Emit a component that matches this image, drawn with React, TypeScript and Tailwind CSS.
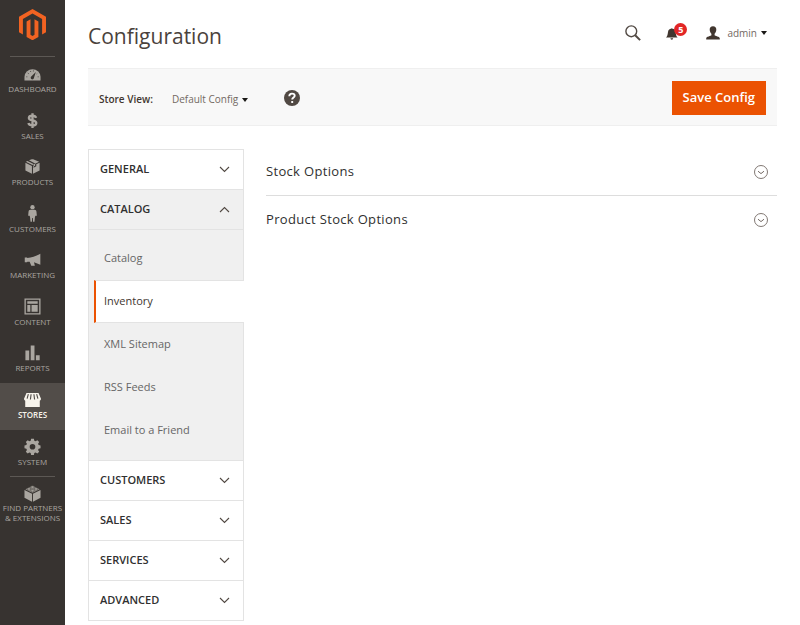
import { useState, type ReactNode } from "react";
import { clsx } from "clsx";

const menuItems: { label: string; icon: ReactNode }[] = [
  {
    label: "Dashboard",
    icon: (
      <>
        <path d="M.5 16.5v-4a8.5 8 0 0 1 17 0v4z" fill="currentColor" />
        <path d="M12.5 7.5 8 12a1.7 1.7 0 1 0 2.4 2z" fill="#373330" />
        <path
          d="M2.5 12.5h1M4 8.5l1 .7M6.7 6.3l.5 1M10 5.8v1M14.5 12.5h1M14 9l-.6.5"
          stroke="#373330"
          strokeWidth=".8"
        />
      </>
    ),
  },
  {
    label: "Sales",
    icon: (
      <path
        d="M12.8 6.2C12.3 4.6 11 4 9 4c-2.2 0-3.8.9-3.8 2.4 0 3.5 7.8 1.6 7.8 5.2 0 1.6-1.5 2.6-4 2.6-2.3 0-3.9-.8-4.3-2.5M9 1.2v15.8"
        fill="none"
        stroke="currentColor"
        strokeWidth="2.5"
      />
    ),
  },
  {
    label: "Products",
    icon: (
      <path
        d="M8.2 1.2 5.3 2.5l6.5 3.2v2.5l-1.7.8V6.4L3.7 3.2 2 4l6.9 3.5L16 4 9.7 1.2zM1.5 5v8.2l6.9 3.5V8.4zM16.5 5v8.2l-7 3.5V8.4l.6-.2v2.1l2.9-1.5V6.7z"
        fill="currentColor"
      />
    ),
  },
  {
    label: "Customers",
    icon: (
      <>
        <circle cx="9" cy="2.3" r="2.3" fill="currentColor" />
        <path
          d="M7 4.9h4c1.5 0 2.1.9 2.2 2.3l.4 4.2h-1.5l-.5 1.2-.5 5.2H9.6l-.2-4h-.8l-.2 4H6.9L6.4 12.6l-.5-1.2H4.4l.4-4.2C4.9 5.8 5.5 4.9 7 4.9z"
          fill="currentColor"
        />
      </>
    ),
  },
  {
    label: "Marketing",
    icon: (
      <path
        d="M17.3 3v11.5l-6.7-2.6.9 3.8H7.7L6 11.5l-2.4-.2-.4.7H.8V6.8h2.4l.4.7C8 7 12.5 5.5 17.3 3z"
        fill="currentColor"
      />
    ),
  },
  {
    label: "Content",
    icon: (
      <>
        <path d="M1.2 1.2h15.6v15.6H1.2z" fill="none" stroke="currentColor" strokeWidth="1.4" />
        <path d="M3.5 3.5h11v2.7h-11zM3.5 7.5h3.2v7H3.5zM8 7.5h6.5v7H8z" fill="currentColor" />
      </>
    ),
  },
  {
    label: "Reports",
    icon: <path d="M1.5 7h4v10.3h-4zM7.1 1.5h4v15.8h-4zM12.6 12h4v5.3h-4z" fill="currentColor" />,
  },
  {
    label: "Stores",
    icon: (
      <>
        <path
          d="M2.6 2h12.8L18 8.2a2 2 0 0 1-1.3 2V17H1.3v-6.8a2 2 0 0 1-1.3-2z"
          fill="currentColor"
        />
        <path
          d="M4.6 3.4 3.3 8M7.5 3.4 6.8 9M10.5 3.4l.7 5.6M13.4 3.4 14.7 8"
          stroke="#524d49"
          strokeWidth="1.2"
        />
      </>
    ),
  },
  {
    label: "System",
    icon: (
      <path
        fillRule="evenodd"
        d="M7.5.8h3l.4 2.1 1.4.6L14.1 2.3l2 2-1.2 1.8.6 1.4 2 .4v3l-2 .4-.6 1.4 1.2 1.8-2 2-1.8-1.2-1.4.6-.4 2h-3l-.4-2-1.4-.6-1.8 1.2-2-2 1.2-1.8-.6-1.4-2-.4v-3l2-.4.6-1.4-1.2-1.8 2-2 1.8 1.2 1.4-.6zM9 6.3a3 3 0 1 0 0 6 3 3 0 0 0 0-6z"
        fill="currentColor"
      />
    ),
  },
];

const sections = [
  { title: "General", items: [] },
  {
    title: "Catalog",
    items: ["Catalog", "Inventory", "XML Sitemap", "RSS Feeds", "Email to a Friend"],
  },
  { title: "Customers", items: [] },
  { title: "Sales", items: [] },
  { title: "Services", items: [] },
  { title: "Advanced", items: [] },
];

function MenuIcon({ children }: { children: ReactNode }) {
  return (
    <svg viewBox="0 0 18 18" className="h-[17px] w-[17px] shrink-0" aria-hidden="true">
      {children}
    </svg>
  );
}

function Sidebar() {
  return (
    <aside className="flex w-[65px] shrink-0 flex-col items-center bg-[#373330] text-[#aaa6a0]">
      <a href="#" aria-label="Home" className="mt-[9px] mb-4">
        <svg viewBox="0 0 27 31" className="h-[31px] w-[27px]">
          <path
            d="M13.5 0 27 7.8v15.5l-3.9 2.2V10L13.5 4.5 3.9 10v15.5L0 23.3V7.8z"
            fill="#f26322"
          />
          <path
            d="M11.5 10.2v15.5l2 1.2 2-1.2V10.2l3.9 2.2v15.5l-5.9 3.4-5.9-3.4V12.4z"
            fill="#f26322"
          />
        </svg>
      </a>
      <nav className="w-full text-center text-[8px] leading-[10px] uppercase">
        <div className="mx-[10px] h-px bg-[#5c5854]" />
        <ul className="flex h-[419px] flex-col">
          {menuItems.map((item) => (
            <li key={item.label} className="flex-1">
              <a
                href="#"
                className={clsx(
                  "flex h-full flex-col items-center gap-0.5 pt-2",
                  item.label === "Stores" && "bg-[#524d49] font-semibold text-[#f7f3eb]",
                )}
              >
                <MenuIcon>{item.icon}</MenuIcon>
                {item.label}
              </a>
            </li>
          ))}
        </ul>
        <div className="mx-[10px] h-px bg-[#5c5854]" />
        <a href="#" className="flex flex-col items-center gap-px pt-2">
          <MenuIcon>
            <path
              d="M9 1 1.5 4.5 9 8.2l7.5-3.7zM.5 5.2v8.4l8 4.1V9.2zM17.5 5.2v8.4l-8 4.1V9.2z"
              fill="currentColor"
            />
            <g fill="currentColor" stroke="#373330" strokeWidth=".6">
              <ellipse cx="9" cy="2.2" rx="2.1" ry="1.3" />
              <ellipse cx="5.2" cy="4.2" rx="2.1" ry="1.3" />
              <ellipse cx="12.8" cy="4.2" rx="2.1" ry="1.3" />
              <ellipse cx="9" cy="6.2" rx="2.1" ry="1.3" />
            </g>
          </MenuIcon>
          <span>
            Find Partners
            <br />& Extensions
          </span>
        </a>
      </nav>
    </aside>
  );
}

function Caret() {
  return (
    <svg viewBox="0 0 6 4" className="h-1 w-1.5" aria-hidden="true">
      <path d="M0 0h6L3 4z" fill="#1a1816" />
    </svg>
  );
}

function Header() {
  return (
    <header className="flex items-center pr-[10px]">
      <h1 className="flex-1 text-[21px] leading-8 text-[#4a423c]">Configuration</h1>
      <div className="flex items-center pb-1.5">
        <button type="button" aria-label="Search" className="mr-[25px]">
          <svg viewBox="0 0 16 16" className="h-4 w-4" fill="none" stroke="#514943">
            <circle cx="6.3" cy="6.3" r="5.4" strokeWidth="1.4" />
            <path d="m10.2 10.2 4.9 4.9" strokeWidth="2" />
          </svg>
        </button>
        <button type="button" aria-label="Notifications" className="relative mr-5">
          <svg viewBox="0 0 20 16" className="h-4 w-5">
            <path
              d="M0 12.5c1.5-1.4 1.6-3.3 2-5.6C2.3 5 3.4 4.1 5 3.8a.9.9 0 0 1 1.6 0c1.6.3 2.7 1.2 3 3.1.4 2.3.5 4.2 2 5.6zM4.4 13.3h2.8a1.4 1.4 0 0 1-2.8 0z"
              fill="#41362f"
            />
          </svg>
          <span className="absolute -top-0.5 -right-px h-[13px] w-[13px] rounded-full bg-[#e22626] text-[9px] leading-[13px] font-bold text-white">
            5
          </span>
        </button>
        <button type="button" className="flex items-center text-[10px] text-[#736963]">
          <svg viewBox="0 0 14 14" className="mr-[7px] h-3.5 w-3.5" aria-hidden="true">
            <path
              d="M7 .3c2.2 0 3.4 1.4 3.3 3.5-.1 1.9-.8 3-1.7 4v1.5c.3 1 5 1 5.2 3.1v1.2H.2v-1.2c.2-2.1 4.9-2.1 5.2-3.1V7.8c-.9-1-1.6-2.1-1.7-4C3.6 1.7 4.8.3 7 .3z"
              fill="#41362f"
            />
          </svg>
          <span className="mr-1">admin</span>
          <Caret />
        </button>
      </div>
    </header>
  );
}

function Toolbar() {
  return (
    <div className="mt-4 flex items-center border-y border-[#efefef] bg-[#f8f8f8] pt-3 pr-[11px] pb-[10px] pl-[11px]">
      <div className="flex items-center pt-[3px] text-[10px]">
        <span className="font-semibold text-[#41362f]">Store View:</span>
        <button type="button" className="ml-[19px] flex items-center text-[#736963]">
          <span className="mr-1">Default Config</span>
          <Caret />
        </button>
      </div>
      <button type="button" aria-label="Help" className="ml-9">
        <svg viewBox="0 0 16 16" className="h-4 w-4">
          <circle cx="8" cy="8" r="8" fill="#514943" />
          <path
            d="M5.3 6.2c0-1.8 1.1-2.6 2.7-2.6s2.7.9 2.7 2.2c0 1.7-2.5 1.9-2.5 3.8M8.2 11v2"
            fill="none"
            stroke="#fff"
            strokeWidth="1.9"
          />
        </svg>
      </button>
      <button
        type="button"
        className="ml-auto h-[34px] bg-[#eb5202] px-[11px] text-[13px] font-semibold text-white"
      >
        Save Config
      </button>
    </div>
  );
}

function ConfigNav() {
  const [open, setOpen] = useState("Catalog");
  const [current, setCurrent] = useState("Inventory");

  return (
    <nav className="w-[156px] shrink-0 self-start border border-b-0 border-[#e3e3e3]">
      {sections.map(({ title, items }) => {
        const isOpen = open === title;
        return (
          <div key={title} className={clsx("border-b border-[#e3e3e3]", isOpen && "bg-[#f0f0f0]")}>
            <button
              type="button"
              aria-expanded={isOpen}
              onClick={() => setOpen(isOpen ? "" : title)}
              className="flex h-[39px] w-full items-center justify-between pr-[13px] pl-[11px] text-[11px] font-semibold text-[#303030] uppercase"
            >
              {title}
              <svg
                viewBox="0 0 11 7"
                className={clsx("h-[7px] w-[11px]", isOpen && "rotate-180")}
                fill="none"
                stroke="#514943"
                strokeWidth="1.1"
              >
                <path d="m1 1 4.5 4.5L10 1" />
              </svg>
            </button>
            {isOpen && items.length > 0 && (
              <ul className="border-t border-[#e3e3e3] pt-[7px] pb-2 text-[11px]">
                {items.map((item) => (
                  <li key={item}>
                    <a
                      href="#"
                      onClick={() => setCurrent(item)}
                      className={clsx(
                        "-mr-px ml-[5px] flex h-[43px] items-center",
                        item === current
                          ? "border-y border-l-2 border-y-[#e3e3e3] border-l-[#eb5202] bg-white pl-2 text-[#41362f]"
                          : "pl-[10px] text-[#666]",
                      )}
                    >
                      {item}
                    </a>
                  </li>
                ))}
              </ul>
            )}
          </div>
        );
      })}
    </nav>
  );
}

function OptionGroup({ title }: { title: string }) {
  return (
    <button
      type="button"
      className="flex h-[47px] w-full items-center justify-between border-b border-[#ddd] pr-[9px] text-[13px] font-medium tracking-wide text-[#303030] last:border-0"
    >
      {title}
      <svg viewBox="0 0 14 14" className="h-3.5 w-3.5" fill="none" stroke="#736963">
        <circle cx="7" cy="7" r="6.5" strokeWidth=".9" />
        <path d="M4 6.2 7 8.6l3-2.4" />
      </svg>
    </button>
  );
}

export default function App() {
  return (
    <div className="flex min-h-screen bg-white font-['Open_Sans',sans-serif]">
      <Sidebar />
      <main className="min-w-0 flex-1 pt-5 pr-[23px] pl-[23px]">
        <Header />
        <Toolbar />
        <div className="mt-[23px] flex gap-[22px]">
          <ConfigNav />
          <div className="min-w-0 flex-1">
            <OptionGroup title="Stock Options" />
            <OptionGroup title="Product Stock Options" />
          </div>
        </div>
      </main>
    </div>
  );
}
